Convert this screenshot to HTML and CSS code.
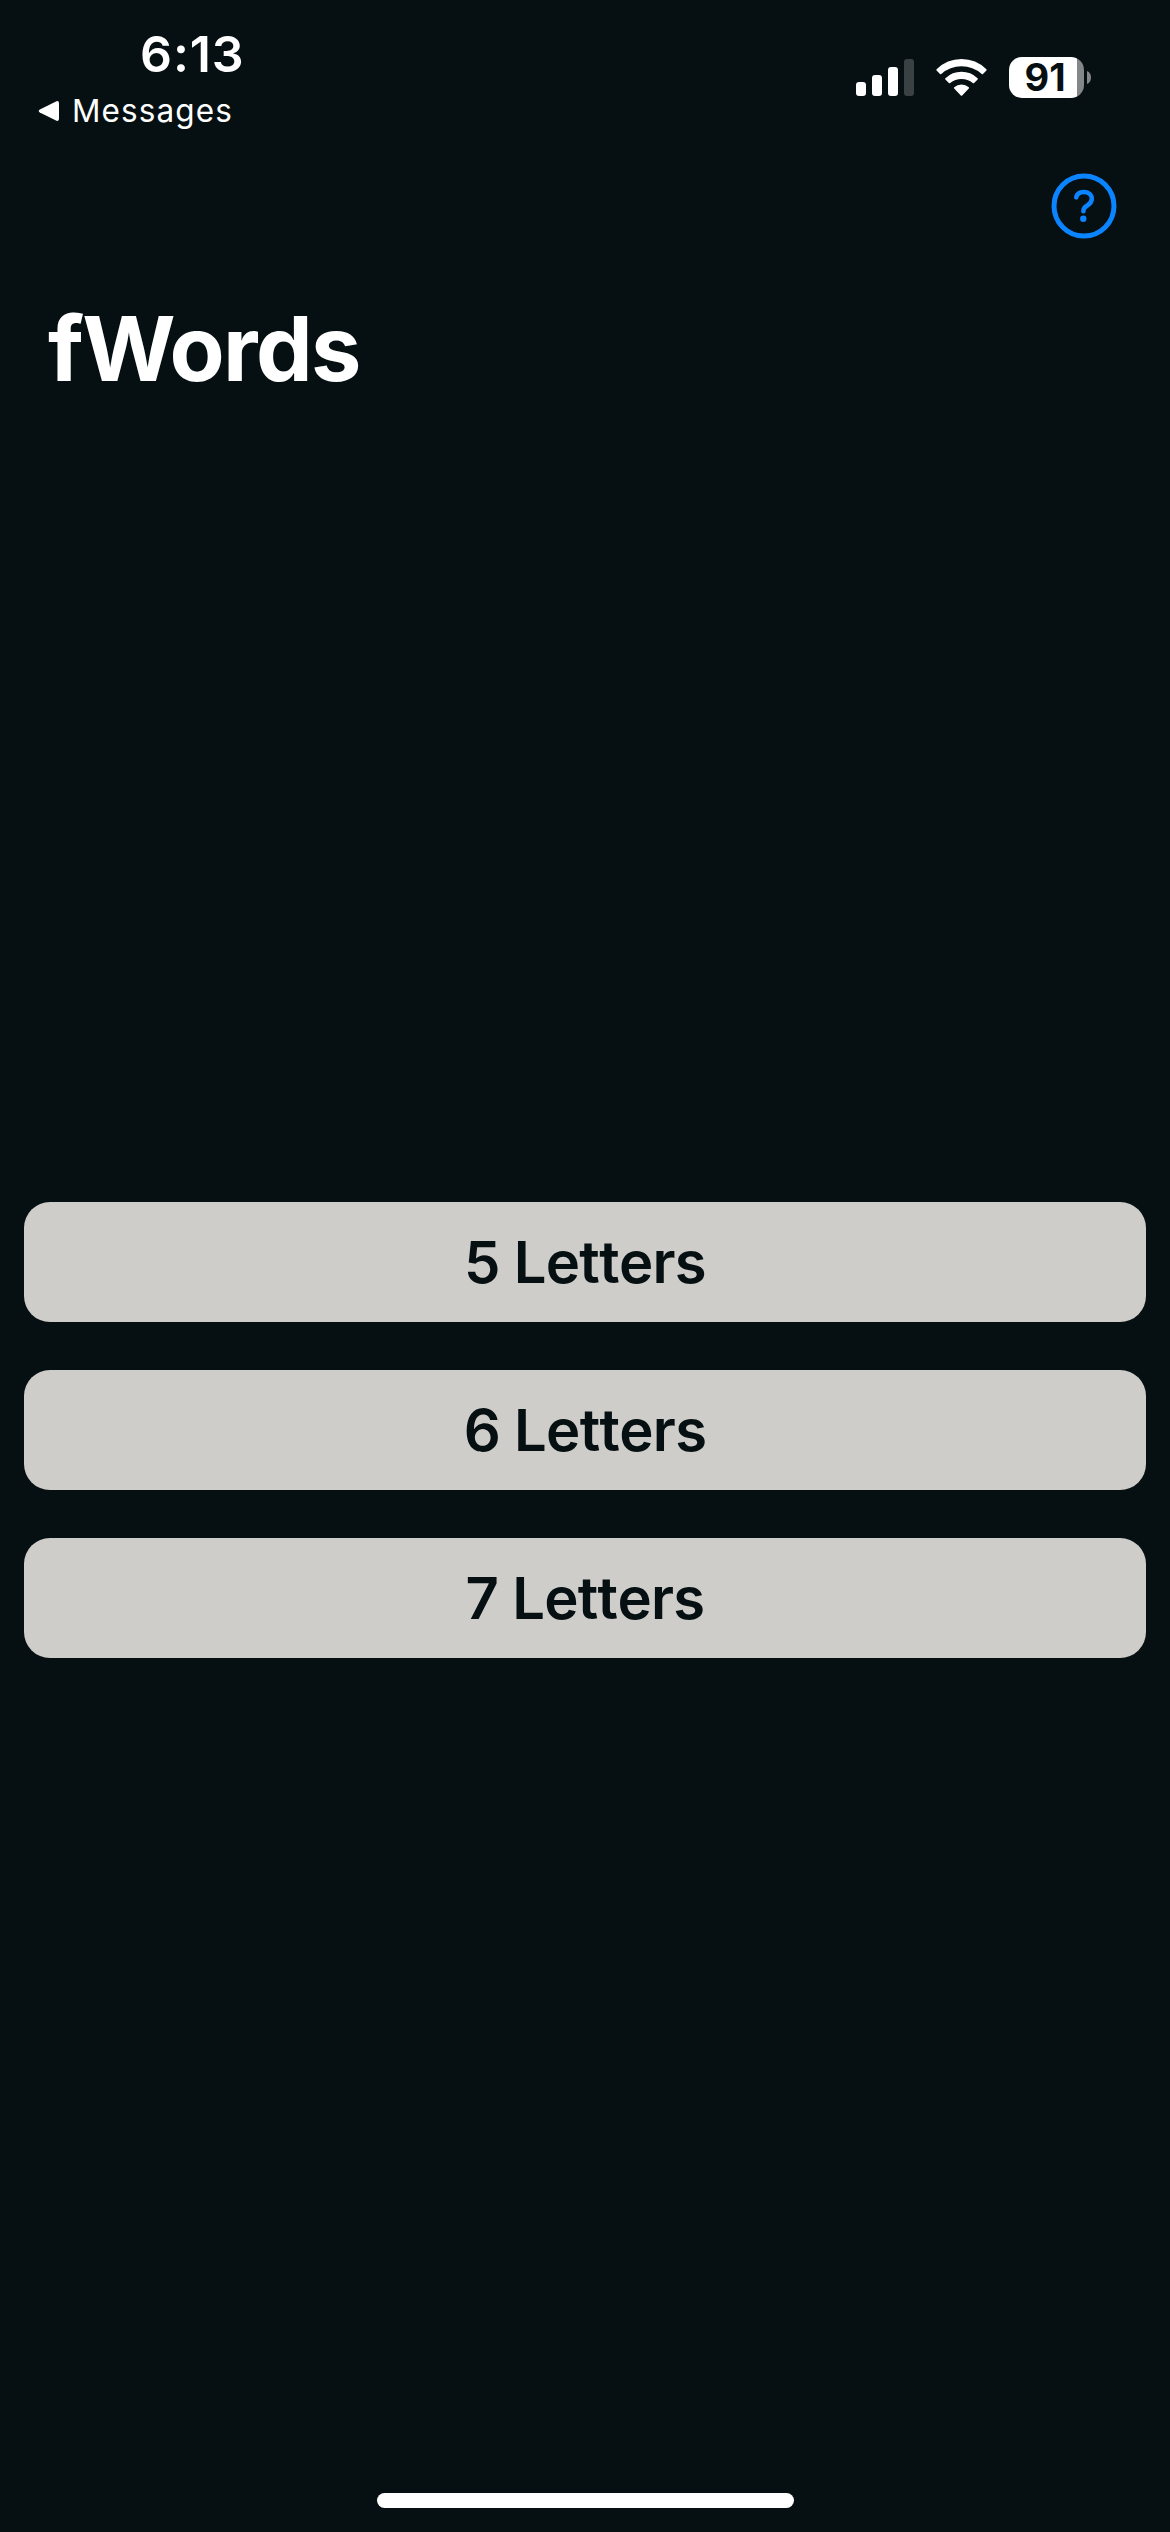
FILE: index.html
```html
<!DOCTYPE html>
<html lang="en">
<head>
<meta charset="utf-8">
<title>fWords</title>
<link rel="stylesheet" href="styles.css">
</head>
<body>
<div class="screen">
  <header class="status">
    <div class="status-left">
      <div class="time">6:13</div>
      <div class="back">
        <svg class="back-arrow" width="22" height="22" viewBox="0 0 22 22"><path d="M18.500 1.200 1.800 9.600q-2.200 1.400 0 2.800l16.700 8.400q2.500.7 2.500-2V3.200q0-2.700-2.500-2z" fill="#fff"/></svg>
        <span class="back-label">Messages</span>
      </div>
    </div>
    <div class="status-right">
      <svg class="signal" width="58" height="38" viewBox="0 0 58 38" fill="#fff">
        <rect x="0" y="23" width="10" height="14" rx="3"/>
        <rect x="16" y="16" width="10" height="21" rx="3"/>
        <rect x="32" y="8" width="10" height="29" rx="3"/>
        <rect x="48" y="0" width="10" height="37" rx="3" fill="#3a4143"/>
      </svg>
      <svg class="wifi" width="51" height="38" viewBox="0 0 51 38" fill="#fff">
        <path d="M.6 10.200Q11 0 25.500 0t24.900 10.200q.6.700 0 1.300l-3.400 3.500q-.6.600-1.300 0Q37 7.300 25.500 7.300T5.300 15q-.7.600-1.300 0L.6 11.500q-.6-.6 0-1.300z"/>
        <path d="M9.400 19.200Q16.300 12.800 25.500 12.800t16.100 6.400q.7.700 0 1.300l-3.500 3.500q-.6.600-1.300 0-4.900-4.100-11.300-4.100T14.200 24q-.7.600-1.300 0l-3.500-3.500q-.7-.6 0-1.300z"/>
        <path d="M18.200 28.200q3.100-2.700 7.300-2.700t7.300 2.700q.7.700 0 1.400l-6.600 6.800q-.7.600-1.400 0l-6.600-6.800q-.7-.7 0-1.400z"/>
      </svg>
      <div class="battery">
        <div class="battery-body"><span class="battery-level">91</span></div>
        <svg width="4" height="13" viewBox="0 0 4 13"><path d="M0 0q4 1.800 4 6.500T0 13z" fill="#838789"/></svg>
      </div>
    </div>
  </header>
  <nav class="toolbar">
    <svg class="help" width="66" height="66" viewBox="0 0 66 66" fill="none" stroke="#0a84ff" stroke-linecap="round" stroke-linejoin="round">
      <circle cx="33" cy="33" r="30" stroke-width="5"/>
      <path d="M25.200 24.400c.8-3.700 3.800-5.400 7.500-5.400 4.600 0 8.100 2.700 8.100 6.800 0 3.200-1.700 5-4.500 6.700-2.800 1.700-3.900 2.900-3.900 5.200v.5" stroke-width="4.500"/>
      <circle cx="32.300" cy="45.800" r="3.200" fill="#0a84ff" stroke="none"/>
    </svg>
  </nav>
  <h1 class="title">fWords</h1>
  <main class="choices">
    <button class="choice">5 Letters</button>
    <button class="choice">6 Letters</button>
    <button class="choice">7 Letters</button>
  </main>
  <footer class="footer"><div class="home-bar"></div></footer>
</div>
</body>
</html>
```
FILE: styles.css
```css
* { box-sizing: border-box; }

body {
  margin: 0;
  background: #061012;
  color: #fff;
  font-family: Inter, "Liberation Sans", sans-serif;
}

.screen {
  width: 1170px;
  height: 2532px;
  display: flex;
  flex-direction: column;
}

.status {
  height: 173px;
  display: flex;
  justify-content: space-between;
}

.status-left { padding: 24px 0 0 38px; }

.time {
  padding-left: 102px;
  font-size: 50px;
  line-height: 60px;
  font-weight: 600;
  letter-spacing: 0.9px;
}

.back {
  display: flex;
  align-items: center;
  gap: 12px;
  height: 40px;
  margin-top: 7px;
}

.back-label {
  font-size: 31.5px;
  line-height: 40px;
  letter-spacing: 1.1px;
}

.status-right {
  display: flex;
  align-items: flex-start;
  padding: 57px 79px 0 0;
}

.signal { margin: 2px 22px 0 0; }
.wifi { margin: 2px 22px 0 0; }

.battery {
  display: flex;
  align-items: center;
  gap: 3px;
}

.battery-body {
  width: 75px;
  height: 41px;
  padding-right: 3px;
  border-radius: 13px;
  background: linear-gradient(90deg, #fff 68px, #838789 68px);
  display: flex;
  align-items: center;
  justify-content: center;
}

.battery-level {
  color: #061012;
  font-size: 38px;
  line-height: 41px;
  font-weight: 700;
}

.toolbar {
  height: 116px;
  padding-right: 53px;
  display: flex;
  justify-content: flex-end;
}

.title {
  margin: 0;
  padding-left: 48px;
  height: 120px;
  font-size: 90px;
  line-height: 120px;
  font-weight: 700;
  letter-spacing: -1.6px;
}

.choices {
  flex: 1;
  padding: 793px 24px 0;
  display: flex;
  flex-direction: column;
  gap: 48px;
}

.choice {
  height: 120px;
  padding: 0;
  border: 0;
  border-radius: 26px;
  background: #cfcdc9;
  color: #061012;
  font: 600 58px/120px Inter, "Liberation Sans", sans-serif;
  letter-spacing: -0.7px;
  font-kerning: none;
}

.footer {
  height: 39px;
  display: flex;
  justify-content: center;
}

.home-bar {
  width: 417px;
  height: 15px;
  border-radius: 8px;
  background: #fff;
}
```
